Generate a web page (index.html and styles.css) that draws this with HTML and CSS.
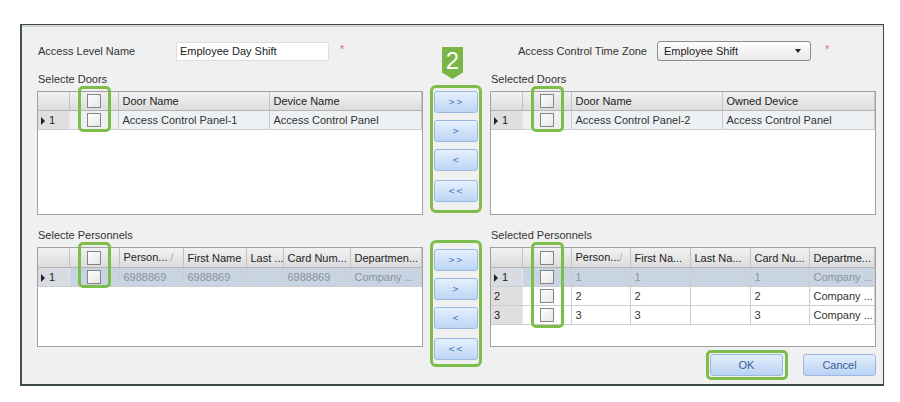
FILE: index.html
```html
<!DOCTYPE html>
<html>
<head>
  <title>Access Level</title>
  <link rel="stylesheet" href="styles.css">
</head>
<body>
  <div class="dialog">
    <div class="top-row">
      <div class="field">
        <span class="field-label level-label">Access Level Name</span>
        <input class="text-input" type="text" value="Employee Day Shift">
        <span class="required">*</span>
      </div>
      <div class="field zone-field">
        <span class="field-label zone-label">Access Control Time Zone</span>
        <div class="select-box">Employee Shift<span class="select-arrow"></span></div>
        <span class="required">*</span>
      </div>
    </div>

    <!-- doors -->
    <div class="section doors">
      <div class="panel">
        <p class="panel-title">Selecte Doors</p>
        <div class="grid-wrap door-grid">
          <table>
            <colgroup><col class="c-head"><col class="c-check"><col style="width:151px"><col></colgroup>
            <tr>
              <th></th>
              <th class="check-cell"><span class="checkbox"></span></th>
              <th>Door Name</th>
              <th>Device Name</th>
            </tr>
            <tr class="current">
              <td class="row-head"><span class="row-arrow"></span>1</td>
              <td class="check-cell"><span class="checkbox"></span></td>
              <td>Access Control Panel-1</td>
              <td>Access Control Panel</td>
            </tr>
          </table>
          <div class="mark"></div>
        </div>
      </div>

      <div class="mover door-mover">
        <div class="step-badge">2</div>
        <button class="move-btn">&gt;&gt;</button>
        <button class="move-btn">&gt;</button>
        <button class="move-btn">&lt;</button>
        <button class="move-btn last">&lt;&lt;</button>
      </div>

      <div class="panel">
        <p class="panel-title">Selected Doors</p>
        <div class="grid-wrap door-grid">
          <table>
            <colgroup><col class="c-head"><col class="c-check"><col style="width:151px"><col></colgroup>
            <tr>
              <th></th>
              <th class="check-cell"><span class="checkbox"></span></th>
              <th>Door Name</th>
              <th>Owned Device</th>
            </tr>
            <tr class="current">
              <td class="row-head"><span class="row-arrow"></span>1</td>
              <td class="check-cell"><span class="checkbox"></span></td>
              <td>Access Control Panel-2</td>
              <td>Access Control Panel</td>
            </tr>
          </table>
          <div class="mark"></div>
        </div>
      </div>
    </div>

    <!-- personnels -->
    <div class="section personnels">
      <div class="panel">
        <p class="panel-title">Selecte Personnels</p>
        <div class="grid-wrap person-grid">
          <table>
            <colgroup><col class="c-head"><col style="width:50px"><col style="width:64px"><col style="width:63px"><col style="width:37px"><col style="width:67px"><col></colgroup>
            <tr>
              <th></th>
              <th class="check-cell"><span class="checkbox"></span></th>
              <th>Person... <span class="sort">/</span></th>
              <th>First Name</th>
              <th>Last ...</th>
              <th>Card Num...</th>
              <th>Departmen...</th>
            </tr>
            <tr class="selected">
              <td class="row-head"><span class="row-arrow"></span>1</td>
              <td class="check-cell"><span class="checkbox"></span></td>
              <td>6988869</td>
              <td>6988869</td>
              <td></td>
              <td>6988869</td>
              <td>Company ...</td>
            </tr>
          </table>
          <div class="mark"></div>
        </div>
      </div>

      <div class="mover person-mover">
        <button class="move-btn">&gt;&gt;</button>
        <button class="move-btn">&gt;</button>
        <button class="move-btn">&lt;</button>
        <button class="move-btn last">&lt;&lt;</button>
      </div>

      <div class="panel">
        <p class="panel-title">Selected Personnels</p>
        <div class="grid-wrap person-grid">
          <table>
            <colgroup><col class="c-head"><col class="c-check"><col style="width:59px"><col style="width:60px"><col style="width:60px"><col style="width:59px"><col></colgroup>
            <tr>
              <th></th>
              <th class="check-cell"><span class="checkbox"></span></th>
              <th>Person...<span class="sort">/</span></th>
              <th>First Na...</th>
              <th>Last Na...</th>
              <th>Card Nu...</th>
              <th>Departme...</th>
            </tr>
            <tr class="selected">
              <td class="row-head"><span class="row-arrow"></span>1</td>
              <td class="check-cell"><span class="checkbox"></span></td>
              <td>1</td>
              <td>1</td>
              <td></td>
              <td>1</td>
              <td>Company ...</td>
            </tr>
            <tr>
              <td class="row-head">2</td>
              <td class="check-cell"><span class="checkbox"></span></td>
              <td>2</td>
              <td>2</td>
              <td></td>
              <td>2</td>
              <td>Company ...</td>
            </tr>
            <tr>
              <td class="row-head">3</td>
              <td class="check-cell"><span class="checkbox"></span></td>
              <td>3</td>
              <td>3</td>
              <td></td>
              <td>3</td>
              <td>Company ...</td>
            </tr>
          </table>
          <div class="mark tall"></div>
        </div>

        <div class="footer">
          <button class="dlg-btn ok-btn">OK</button>
          <button class="dlg-btn">Cancel</button>
        </div>
      </div>
    </div>
  </div>
</body>
</html>
```

FILE: styles.css
```css
body {
  margin: 0;
  background-color: #fff;
  font-family: "Liberation Sans", Arial, sans-serif;
  font-size: 11px;
  color: #333;
}

.dialog {
  box-sizing: border-box;
  width: 864px;
  height: 362px;
  margin: 24px 0 0 20px;
  padding: 16px 7px 0 15px;
  background-color: #f0f0f0;
  border: 1px solid #3f4546;
  border-left: 2px solid #41564a;
  border-bottom: 2px solid #3c4a40;
  box-shadow: inset 0 2px 0 #d6d6d6;
}

/* top fields */
.top-row {
  display: flex;
  height: 20px;
}

.field {
  display: flex;
  align-items: center;
  width: 386px;
  white-space: nowrap;
}

.zone-field {
  margin-left: 67px;
  padding-left: 27px;
  box-sizing: border-box;
}

.field-label {
  padding-left: 1px;
}

.level-label {
  width: 138px;
}

.zone-label {
  width: 139px;
}

.text-input {
  box-sizing: border-box;
  width: 153px;
  height: 19px;
  padding: 0 3px;
  border: 1px solid #dedede;
  background-color: #fff;
  font-family: inherit;
  font-size: 11px;
  color: #222;
}

.select-box {
  position: relative;
  box-sizing: border-box;
  width: 154px;
  height: 20px;
  padding: 3px 0 0 6px;
  border: 1px solid #8c8c8c;
  border-radius: 3px;
  background: linear-gradient(#fdfdfd, #e9e9e9);
  color: #222;
}

.select-arrow {
  position: absolute;
  right: 9px;
  top: 7px;
  border-left: 3px solid transparent;
  border-right: 3px solid transparent;
  border-top: 4px solid #222;
}

.required {
  margin-left: 11px;
  margin-top: -4px;
  color: #e46a6a;
  font-size: 11px;
}

.zone-field .required {
  margin-left: 14px;
}

/* sections */
.section {
  display: grid;
  grid-template-columns: 386px 67px 386px;
  align-items: start;
}

.doors {
  margin-top: 11px;
}

.personnels {
  margin-top: 13px;
}

.panel-title {
  margin: 0 0 5px 1px;
  line-height: 14px;
}

.grid-wrap {
  position: relative;
  box-sizing: border-box;
  border: 1px solid #a0a0a0;
  background-color: #fff;
}

.door-grid {
  height: 124px;
}

.person-grid {
  height: 100px;
}

.grid-wrap table {
  width: 100%;
  border-collapse: collapse;
  table-layout: fixed;
}

.c-head {
  width: 31px;
}

.c-check {
  width: 49px;
}

.grid-wrap th,
.grid-wrap td {
  padding: 0 0 0 4px;
  line-height: 18px;
  border-right: 1px solid #cdcdcd;
  border-bottom: 1px solid #cdcdcd;
  text-align: left;
  font-weight: normal;
  white-space: nowrap;
  overflow: hidden;
}

.grid-wrap th {
  background: linear-gradient(#f1f1f1, #dcdcdc);
  border-right-color: #c3c3c3;
  border-bottom-color: #b4b4b4;
  color: #222;
}

.grid-wrap td {
  color: #333;
}

.grid-wrap td.row-head {
  padding-left: 3px;
  background-color: #dfdfdf;
  border-right-color: #e8e8e8;
  color: #222;
}

.row-arrow {
  display: inline-block;
  margin-right: 4px;
  border-left: 4px solid #222;
  border-top: 4px solid transparent;
  border-bottom: 4px solid transparent;
  vertical-align: -1px;
}

.grid-wrap .check-cell {
  padding: 0;
  text-align: center;
}

.checkbox {
  display: inline-block;
  box-sizing: border-box;
  width: 14px;
  height: 14px;
  border: 1px solid #858585;
  background: linear-gradient(135deg, #fefefe, #e6e6e6);
  vertical-align: -3px;
}

.current td {
  background-color: #eef1f4;
}

.selected td {
  background-color: #c8d4e2;
  color: #8a929c;
}

.selected td.row-head {
  background-color: #d8dce2;
}

.sort {
  color: #a8a8a8;
  font-size: 10px;
}

/* green highlight over the checkbox columns */
.mark {
  position: absolute;
  left: 40px;
  top: -6px;
  width: 33px;
  height: 46px;
  box-sizing: border-box;
  border: 3px solid #7dbd4a;
  border-radius: 5px;
}

.mark.tall {
  height: 86px;
}

/* move buttons */
.mover {
  position: relative;
  display: flex;
  flex-direction: column;
  gap: 7px;
  box-sizing: border-box;
  width: 52px;
  margin-left: 7px;
  border: 3px solid #7dbd4a;
  border-radius: 6px;
}

.door-mover {
  margin-top: 13px;
  padding: 3px 1px 8px;
}

.person-mover {
  margin-top: 12px;
  padding: 6px 1px 4px;
}

.move-btn {
  height: 22px;
  padding: 0;
  border: 1px solid #9ab8e0;
  border-radius: 3px;
  background: linear-gradient(#e6f0fd, #bcd5f5);
  font-family: "DejaVu Sans", sans-serif;
  font-size: 8px;
  letter-spacing: 1px;
  color: #4a74b4;
}

.move-btn.last {
  margin-top: 2px;
}

.step-badge {
  position: absolute;
  left: 9px;
  top: -41px;
  width: 21px;
  height: 32px;
  background-color: #7ab646;
  clip-path: polygon(0 0, 100% 0, 100% 80%, 50% 100%, 0 80%);
  color: #fff;
  font-size: 24px;
  line-height: 28px;
  text-align: center;
}

/* footer */
.footer {
  display: flex;
  justify-content: flex-end;
  gap: 20px;
  margin-top: 7px;
}

.dlg-btn {
  position: relative;
  width: 73px;
  height: 22px;
  padding: 0;
  border: 1px solid #9ab8e0;
  border-radius: 3px;
  background: linear-gradient(#e3eefc, #bad3f4);
  font-family: inherit;
  font-size: 11px;
  color: #3a5f94;
}

.ok-btn::after {
  content: "";
  position: absolute;
  left: -5px;
  top: -5px;
  right: -6px;
  bottom: -5px;
  border: 3px solid #7dbd4a;
  border-radius: 5px;
}
```
